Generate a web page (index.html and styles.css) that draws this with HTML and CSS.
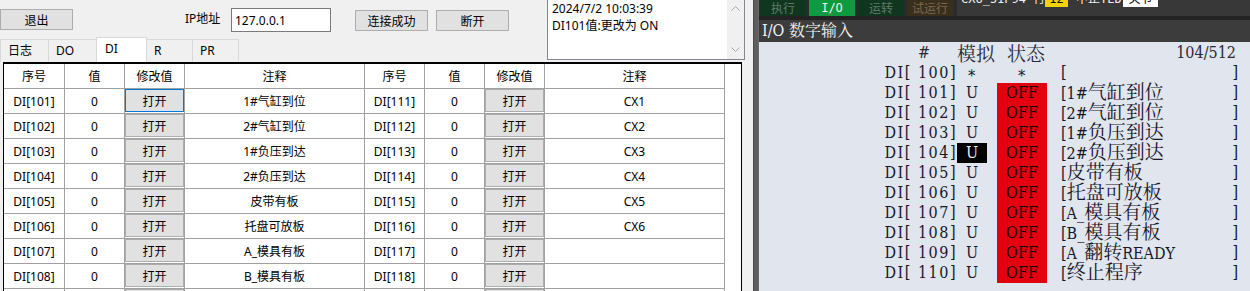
FILE: index.html
```html
<!DOCTYPE html>
<html lang="zh">
<head>
<meta charset="utf-8">
<title>DI</title>
<link rel="stylesheet" href="styles.css">
</head>
<body>
<div class="screen">
  <div class="app">
    <div class="top">
      <div class="controls">
        <div class="toolbar">
          <button class="btn btn-exit">退出</button>
          <span class="ip-label">IP地址</span>
          <input class="ip-input" value="127.0.0.1">
          <button class="btn btn-conn">连接成功</button>
          <button class="btn btn-disc">断开</button>
        </div>
        <div class="tabs">
          <div class="tab tab-log">日志</div>
          <div class="tab tab-do">DO</div>
          <div class="tab tab-di tab-active">DI</div>
          <div class="tab tab-r">R</div>
          <div class="tab tab-pr">PR</div>
        </div>
      </div>
      <div class="log">
        <div class="log-text">
          <div>2024/7/2 10:03:39</div>
          <div>DI101值:更改为 ON</div>
        </div>
        <div class="vscroll">
          <svg width="9" height="5" viewBox="0 0 9 5"><path d="M0.5 4.5 L4.5 0.5 L8.5 4.5" fill="none" stroke="#a6a6a6"/></svg>
          <svg width="9" height="5" viewBox="0 0 9 5"><path d="M0.5 0.5 L4.5 4.5 L8.5 0.5" fill="none" stroke="#a6a6a6"/></svg>
        </div>
      </div>
      <div class="top-rest"></div>
    </div>
    <div class="panel">
      <div class="grid">
        <div>序号</div><div>值</div><div>修改值</div><div>注释</div><div>序号</div><div>值</div><div>修改值</div><div>注释</div>

        <div>DI[101]</div><div>0</div><div class="bc"><button class="btn cell-btn focus">打开</button></div><div>1#气缸到位</div>
        <div>DI[111]</div><div>0</div><div class="bc"><button class="btn cell-btn">打开</button></div><div>CX1</div>

        <div>DI[102]</div><div>0</div><div class="bc"><button class="btn cell-btn">打开</button></div><div>2#气缸到位</div>
        <div>DI[112]</div><div>0</div><div class="bc"><button class="btn cell-btn">打开</button></div><div>CX2</div>

        <div>DI[103]</div><div>0</div><div class="bc"><button class="btn cell-btn">打开</button></div><div>1#负压到达</div>
        <div>DI[113]</div><div>0</div><div class="bc"><button class="btn cell-btn">打开</button></div><div>CX3</div>

        <div>DI[104]</div><div>0</div><div class="bc"><button class="btn cell-btn">打开</button></div><div>2#负压到达</div>
        <div>DI[114]</div><div>0</div><div class="bc"><button class="btn cell-btn">打开</button></div><div>CX4</div>

        <div>DI[105]</div><div>0</div><div class="bc"><button class="btn cell-btn">打开</button></div><div>皮带有板</div>
        <div>DI[115]</div><div>0</div><div class="bc"><button class="btn cell-btn">打开</button></div><div>CX5</div>

        <div>DI[106]</div><div>0</div><div class="bc"><button class="btn cell-btn">打开</button></div><div>托盘可放板</div>
        <div>DI[116]</div><div>0</div><div class="bc"><button class="btn cell-btn">打开</button></div><div>CX6</div>

        <div>DI[107]</div><div>0</div><div class="bc"><button class="btn cell-btn">打开</button></div><div>A_模具有板</div>
        <div>DI[117]</div><div>0</div><div class="bc"><button class="btn cell-btn">打开</button></div><div></div>

        <div>DI[108]</div><div>0</div><div class="bc"><button class="btn cell-btn">打开</button></div><div>B_模具有板</div>
        <div>DI[118]</div><div>0</div><div class="bc"><button class="btn cell-btn">打开</button></div><div></div>

        <div class="last"></div><div class="last"></div><div class="bc last"><button class="btn cell-btn"></button></div><div class="last"></div>
        <div class="last"></div><div class="last"></div><div class="bc last"><button class="btn cell-btn"></button></div><div class="last"></div>
      </div>
    </div>
  </div>

  <div class="divider"></div>

  <div class="pendant">
    <div class="pd-top">
      <div class="pd-btn pd-dim">执行</div>
      <div class="pd-btn pd-on">I/O</div>
      <div class="pd-btn pd-dim pd-run">运转</div>
      <div class="pd-btn pd-test">试运行</div>
      <div class="pd-status">
        <span class="st-prog">CX6_51P94 行0</span>
        <span class="st-yellow">12</span>
        <span class="st-stop">中止TED</span>
        <span class="st-white">关节</span>
      </div>
    </div>
    <div class="pd-sep"></div>
    <div class="pd-title">I/O <span class="zh16">数字输入</span></div>
    <div class="pd-body">
      <div class="pd-head">
        <span class="h-hash">#</span>
        <span class="h-sim zh">模拟</span>
        <span class="h-state zh">状态</span>
        <span class="h-count">104/512</span>
      </div>
      <div class="pd-row"><span class="pd-label">DI[ 100]</span><span class="pd-sim">∗</span><span class="pd-state">∗</span><span class="pd-cmt"><span>[</span><span>]</span></span></div>
      <div class="pd-row"><span class="pd-label">DI[ 101]</span><span class="pd-sim">U</span><span class="pd-state off">OFF</span><span class="pd-cmt"><span>[1#<span class="zh">气缸到位</span></span><span>]</span></span></div>
      <div class="pd-row"><span class="pd-label">DI[ 102]</span><span class="pd-sim">U</span><span class="pd-state off">OFF</span><span class="pd-cmt"><span>[2#<span class="zh">气缸到位</span></span><span>]</span></span></div>
      <div class="pd-row"><span class="pd-label">DI[ 103]</span><span class="pd-sim">U</span><span class="pd-state off">OFF</span><span class="pd-cmt"><span>[1#<span class="zh">负压到达</span></span><span>]</span></span></div>
      <div class="pd-row"><span class="pd-label">DI[ 104]</span><span class="pd-sim sel">U</span><span class="pd-state off">OFF</span><span class="pd-cmt"><span>[2#<span class="zh">负压到达</span></span><span>]</span></span></div>
      <div class="pd-row"><span class="pd-label">DI[ 105]</span><span class="pd-sim">U</span><span class="pd-state off">OFF</span><span class="pd-cmt"><span>[<span class="zh">皮带有板</span></span><span>]</span></span></div>
      <div class="pd-row"><span class="pd-label">DI[ 106]</span><span class="pd-sim">U</span><span class="pd-state off">OFF</span><span class="pd-cmt"><span>[<span class="zh">托盘可放板</span></span><span>]</span></span></div>
      <div class="pd-row"><span class="pd-label">DI[ 107]</span><span class="pd-sim">U</span><span class="pd-state off">OFF</span><span class="pd-cmt"><span>[A_<span class="zh">模具有板</span></span><span>]</span></span></div>
      <div class="pd-row"><span class="pd-label">DI[ 108]</span><span class="pd-sim">U</span><span class="pd-state off">OFF</span><span class="pd-cmt"><span>[B_<span class="zh">模具有板</span></span><span>]</span></span></div>
      <div class="pd-row"><span class="pd-label">DI[ 109]</span><span class="pd-sim">U</span><span class="pd-state off">OFF</span><span class="pd-cmt"><span>[A_<span class="zh">翻转</span>READY</span><span>]</span></span></div>
      <div class="pd-row"><span class="pd-label">DI[ 110]</span><span class="pd-sim">U</span><span class="pd-state off">OFF</span><span class="pd-cmt"><span>[<span class="zh">终止程序</span></span><span>]</span></span></div>
    </div>
  </div>
</div>
</body>
</html>
```

FILE: styles.css
```css
* { box-sizing: border-box; }
html, body { margin: 0; padding: 0; }
body {
  width: 1250px;
  height: 291px;
  overflow: hidden;
  background: #f0f0f0;
  font-family: "Segoe UI", "Noto Sans", "Noto Sans CJK SC", sans-serif;
  font-size: 12px;
  color: #000;
}
.screen { display: flex; height: 291px; }

/* ---------- left application ---------- */
.app {
  width: 753px;
  flex: none;
  display: flex;
  flex-direction: column;
  background: #f0f0f0;
}
.top { display: flex; height: 62px; flex: none; }
.controls { width: 547px; display: flex; flex-direction: column; }
.toolbar { height: 37px; display: flex; align-items: flex-start; }
.btn {
  font: inherit;
  color: #000;
  background: #e1e1e1;
  border: 1px solid #adadad;
  padding: 0;
  margin: 0;
}
.btn-exit { width: 73px; height: 21px; margin-top: 9px; }
.ip-label { width: 46px; margin-left: 112px; margin-top: 10px; line-height: 18px; }
.ip-input {
  width: 100px;
  height: 24px;
  margin-top: 8px;
  border: 1px solid #7a7a7a;
  background: #fff;
  font: inherit;
  color: #000;
  padding: 0 0 0 3px;
  outline: none;
}
.btn-conn { width: 73px; height: 21px; margin-top: 10px; margin-left: 24px; }
.btn-disc { width: 73px; height: 21px; margin-top: 10px; margin-left: 8px; }

.tabs { height: 25px; display: flex; align-items: flex-end; }
.tab {
  height: 23px;
  border: 1px solid #d9d9d9;
  border-bottom: none;
  margin-right: -1px;
  padding-left: 7px;
  line-height: 22px;
  background: #f0f0f0;
}
.tab-log { width: 49px; }
.tab-do { width: 49px; }
.tab-di { width: 51px; }
.tab-r { width: 47px; }
.tab-pr { width: 47px; }
.tab-active { height: 25px; background: #fff; line-height: 21px; padding-left: 8px; }

.log {
  width: 198px;
  height: 61px;
  margin-top: -1px;
  border: 1px solid #828790;
  background: #fff;
  display: flex;
}
.log-text { flex: 1; padding: 0 0 0 4px; line-height: 17px; }
.vscroll {
  width: 17px;
  background: #f0f0f0;
  display: flex;
  flex-direction: column;
  justify-content: space-between;
  align-items: center;
  padding: 6px 0 7px;
}
.top-rest { flex: 1; }

.panel {
  margin-left: 3px;
  width: 739px;
  flex: 1;
  background: #fff;
  border-top: 2px solid #000;
  border-left: 1px solid #000;
  border-right: 1px solid #000;
  overflow: hidden;
}
.grid {
  display: grid;
  grid-template-columns: 61px 60px 60px 180px 60px 60px 60px 180px;
  grid-auto-rows: 25px;
  width: 721px;
}
.grid > div {
  border-right: 1px solid #a0a0a0;
  border-bottom: 1px solid #a0a0a0;
  display: flex;
  align-items: center;
  justify-content: center;
  white-space: nowrap;
}
.grid > .bc { align-items: flex-start; }
.cell-btn { width: 100%; height: 23px; }
.cell-btn.focus { border-color: #0078d7; }

/* ---------- teach pendant ---------- */
.divider { width: 6px; flex: none; background: #5e5e5e; border-left: 1px solid #4a4a4a; border-right: 1px solid #6a6a6a; }
.pendant {
  width: 491px;
  flex: none;
  display: flex;
  flex-direction: column;
  background: #e1e5ed;
  font-family: "DejaVu Serif", "Noto Serif CJK SC", "Noto Sans CJK SC", serif;
  font-stretch: condensed;
  font-size: 16px;
  color: #17172b;
  overflow: hidden;
}
.pd-top {
  height: 16px;
  flex: none;
  display: flex;
  gap: 3px;
  padding-left: 1px;
  background: #2b2b2b;
  overflow: hidden;
}
.pd-btn {
  width: 46px;
  flex: none;
  display: flex;
  align-items: center;
  justify-content: center;
  font-family: "Noto Sans CJK SC", sans-serif;
  font-size: 12px;
  line-height: 16px;
}
.pd-dim { background: #10361f; color: #5f7b69; }
.pd-on { background: #0f9a42; color: #e6f2ea; font-family: "DejaVu Sans Mono", monospace; }
.pd-test { background: #3a2f1d; color: #7a6a50; }
.pd-status {
  flex: 1;
  margin-left: 1px;
  background: #383838;
  display: flex;
  align-items: flex-start;
  padding-left: 4px;
  font-family: "DejaVu Sans Mono", "Noto Sans CJK SC", monospace;
  font-size: 12px;
  line-height: 14px;
  color: #f0f0f0;
}
.pd-status span { margin-top: -8px; height: 15px; white-space: nowrap; }
.st-prog { width: 84px; }
.st-yellow { width: 23px; background: #f3d300; color: #000; text-align: center; }
.st-stop { width: 47px; margin-left: 8px; }
.st-white { width: 35px; background: #fff; color: #000; text-align: center; }

.pd-sep { height: 4px; flex: none; background: #232323; }
.pd-title {
  height: 22px;
  flex: none;
  background: #3c3c3c;
  color: #f2f2f2;
  padding-left: 3px;
  line-height: 22px;
  white-space: pre;
}
.zh16 { font-family: "Noto Serif CJK SC", "Noto Sans CJK SC", sans-serif; font-size: 16px; line-height: 16px; }
.zh { font-family: "Noto Serif CJK SC", "Noto Sans CJK SC", sans-serif; font-size: 19px; line-height: 16px; }

.pd-body { flex: 1; }
.pd-head { height: 21px; display: flex; align-items: center; line-height: 21px; color: #2a2a35; }
.h-hash { margin-left: 159px; width: 39px; }
.h-sim { width: 50px; }
.h-state { flex: 1; }
.h-count { padding-right: 14px; }

.pd-row { height: 20px; display: flex; align-items: center; line-height: 20px; white-space: pre; }
.pd-label { width: 198px; text-align: right; letter-spacing: 1.5px; }
.pd-sim { width: 30px; height: 20px; text-align: center; }
.pd-sim.sel { background: #000; color: #ececec; }
.pd-state { width: 50px; height: 20px; margin-left: 10px; text-align: center; }
.pd-state.off { background: #e3000f; color: #1a0000; }
.pd-cmt { width: 177px; margin-left: 14px; display: flex; justify-content: space-between; }
```
